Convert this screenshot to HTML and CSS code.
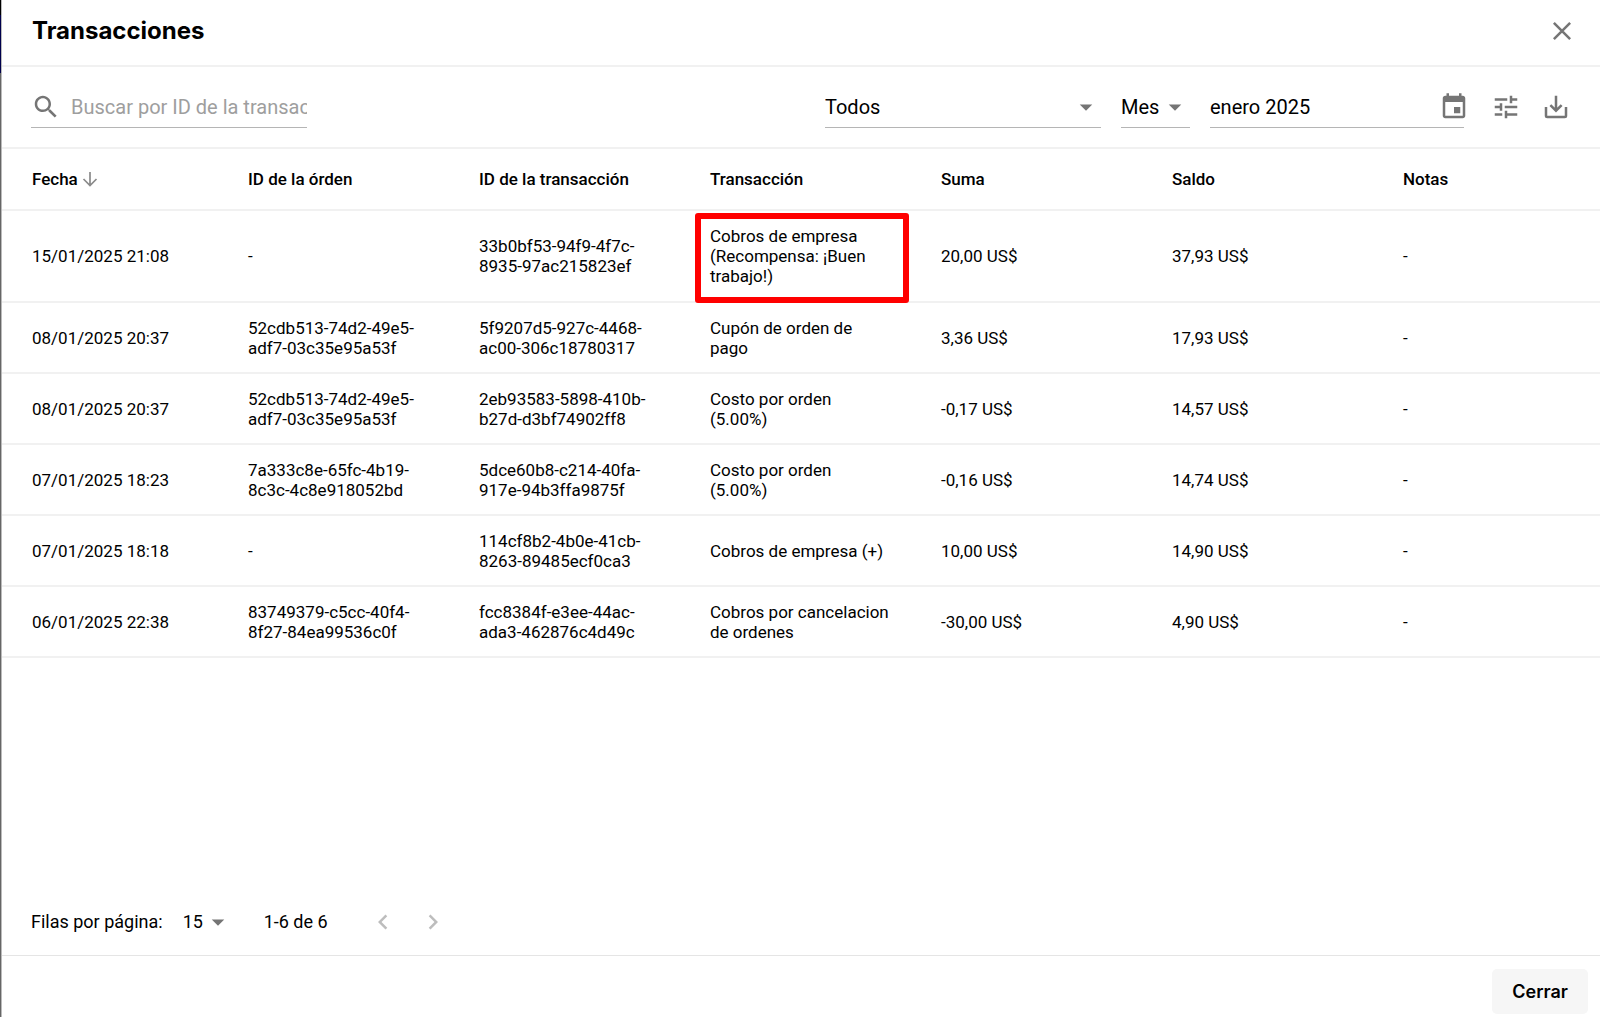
FILE: index.html
```html
<!DOCTYPE html>
<html lang="es">
<head>
    <meta charset="UTF-8">
    <meta name="viewport" content="width=device-width, initial-scale=1.0">
    <title>Transacciones</title>
    <link rel="stylesheet" href="styles.css">
</head>
<body>
    <div class="dialog" role="dialog" aria-labelledby="dialog-title">
        <header class="dialog-header">
            <h1 id="dialog-title">Transacciones</h1>
            <button class="icon-button" type="button" aria-label="Salir">
                <svg class="icon" viewBox="0 0 24 24"><path d="M5.5 5.5l13 13M18.5 5.5l-13 13" fill="none" stroke="currentColor" stroke-width="2"/></svg>
            </button>
        </header>

        <div class="toolbar">
            <label class="field search">
                <svg class="icon" viewBox="0 0 24 24"><path d="M15.5 14h-.79l-.28-.27C15.41 12.59 16 11.11 16 9.5 16 5.91 13.09 3 9.5 3S3 5.91 3 9.5 5.91 16 9.5 16c1.61 0 3.09-.59 4.23-1.57l.27.28v.79l5 4.99L20.49 19l-4.99-5zm-6 0C7.01 14 5 11.99 5 9.5S7.01 5 9.5 5 14 7.01 14 9.5 11.99 14 9.5 14z"/></svg>
                <input type="text" placeholder="Buscar por ID de la transacción" aria-label="Buscar por ID de la transacción">
            </label>
            <div class="field select type">
                <select aria-label="Tipo">
                    <option>Todos</option>
                </select>
                <svg class="icon" viewBox="0 0 24 24"><path d="M7 10l5 5 5-5z"/></svg>
            </div>
            <div class="field select period">
                <select aria-label="Periodo">
                    <option>Mes</option>
                </select>
                <svg class="icon" viewBox="0 0 24 24"><path d="M7 10l5 5 5-5z"/></svg>
            </div>
            <div class="field date">
                <input type="text" value="enero 2025" aria-label="Fecha">
                <button class="calendar-button" type="button" aria-label="Abrir calendario">
                    <svg class="icon" viewBox="0 0 24 24"><path d="M17 12h-5v5h5v-5zM16 1v2H8V1H6v2H5c-1.11 0-1.99.9-1.99 2L3 19c0 1.1.89 2 2 2h14c1.1 0 2-.9 2-2V5c0-1.1-.9-2-2-2h-1V1h-2zm3 18H5V8h14v11z"/></svg>
                </button>
            </div>
            <div class="actions">
                <button class="icon-button" type="button" aria-label="Filtros">
                    <svg class="icon" viewBox="0 0 24 24"><path d="M3 17v2h6v-2H3zM3 5v2h10V5H3zm10 16v-2h8v-2h-8v-2h-2v6h2zM7 9v2H3v2h4v2h2V9H7zm14 4v-2H11v2h10zm-6-4h2V7h4V5h-4V3h-2v6z"/></svg>
                </button>
                <button class="icon-button" type="button" aria-label="Descargar">
                    <svg class="icon" viewBox="0 0 24 24"><path d="M4 12v7a1 1 0 0 0 1 1h14a1 1 0 0 0 1-1v-7M12 3v12M7.5 10.5l4.5 4.5 4.5-4.5" fill="none" stroke="currentColor" stroke-width="2"/></svg>
                </button>
            </div>
        </div>

        <div class="table-wrap">
            <table class="transactions">
                <thead>
                    <tr>
                        <th>
                            <button class="sort" type="button">Fecha<svg viewBox="0 0 18 18"><path d="M9 2v13M2.5 9L9 15.5 15.5 9" fill="none" stroke="currentColor" stroke-width="1.7"/></svg></button>
                        </th>
                        <th>ID de la órden</th>
                        <th>ID de la transacción</th>
                        <th>Transacción</th>
                        <th>Suma</th>
                        <th>Saldo</th>
                        <th class="notes">Notas</th>
                    </tr>
                </thead>
                <tbody>
                    <tr>
                        <td>15/01/2025 21:08</td>
                        <td>-</td>
                        <td>33b0bf53-94f9-4f7c-8935-97ac215823ef</td>
                        <td class="marked">Cobros de empresa (Recompensa: ¡Buen trabajo!)</td>
                        <td>20,00 US$</td>
                        <td>37,93 US$</td>
                        <td>-</td>
                    </tr>
                    <tr>
                        <td>08/01/2025 20:37</td>
                        <td>52cdb513-74d2-49e5-adf7-03c35e95a53f</td>
                        <td>5f9207d5-927c-4468-ac00-306c18780317</td>
                        <td>Cupón de orden de pago</td>
                        <td>3,36 US$</td>
                        <td>17,93 US$</td>
                        <td>-</td>
                    </tr>
                    <tr>
                        <td>08/01/2025 20:37</td>
                        <td>52cdb513-74d2-49e5-adf7-03c35e95a53f</td>
                        <td>2eb93583-5898-410b-b27d-d3bf74902ff8</td>
                        <td>Costo por orden (5.00%)</td>
                        <td>-0,17 US$</td>
                        <td>14,57 US$</td>
                        <td>-</td>
                    </tr>
                    <tr>
                        <td>07/01/2025 18:23</td>
                        <td>7a333c8e-65fc-4b19-8c3c-4c8e918052bd</td>
                        <td>5dce60b8-c214-40fa-917e-94b3ffa9875f</td>
                        <td>Costo por orden (5.00%)</td>
                        <td>-0,16 US$</td>
                        <td>14,74 US$</td>
                        <td>-</td>
                    </tr>
                    <tr>
                        <td>07/01/2025 18:18</td>
                        <td>-</td>
                        <td>114cf8b2-4b0e-41cb-8263-89485ecf0ca3</td>
                        <td>Cobros de empresa (+)</td>
                        <td>10,00 US$</td>
                        <td>14,90 US$</td>
                        <td>-</td>
                    </tr>
                    <tr>
                        <td>06/01/2025 22:38</td>
                        <td>83749379-c5cc-40f4-8f27-84ea99536c0f</td>
                        <td>fcc8384f-e3ee-44ac-ada3-462876c4d49c</td>
                        <td>Cobros por cancelacion de ordenes</td>
                        <td>-30,00 US$</td>
                        <td>4,90 US$</td>
                        <td>-</td>
                    </tr>
                </tbody>
            </table>
        </div>

        <div class="pagination">
            <label for="rows">Filas por página:</label>
            <div class="select rows">
                <select id="rows">
                    <option>15</option>
                </select>
                <svg class="icon" viewBox="0 0 24 24"><path d="M7 10l5 5 5-5z"/></svg>
            </div>
            <span class="range">1-6 de 6</span>
            <div class="pager">
                <button class="icon-button" type="button" aria-label="Página anterior" disabled>
                    <svg class="icon" viewBox="0 0 24 24"><path d="M15.41 7.41L14 6l-6 6 6 6 1.41-1.41L10.83 12z"/></svg>
                </button>
                <button class="icon-button" type="button" aria-label="Página siguiente" disabled>
                    <svg class="icon" viewBox="0 0 24 24"><path d="M8.59 16.59L10 18l6-6-6-6-1.41 1.41L13.17 12z"/></svg>
                </button>
            </div>
        </div>

        <footer class="dialog-footer">
            <button class="close" type="button">Cerrar</button>
        </footer>
    </div>
</body>
</html>
```

FILE: styles.css
```css
* {
    box-sizing: border-box;
}

/* sliver of the dimmed page to the left of the dialog */
body {
    margin: 0;
    padding-left: 1px;
    background: linear-gradient(#000 15px, #00004d 15px, #00004d 73px, #666 73px);
    font-family: Roboto, "Liberation Sans", sans-serif;
    font-size: 17px;
    line-height: 20px;
    color: #000;
}

button, input, select {
    margin: 0;
    padding: 0;
    border: 0;
    background: none;
    font: inherit;
    color: inherit;
    outline: none;
}

button {
    cursor: pointer;
}

.dialog {
    display: flex;
    flex-direction: column;
    min-height: 100vh;
    border-left: 1px solid #bbb;
    background: #fff;
}

.icon {
    display: block;
    flex: none;
    width: 30px;
    height: 30px;
    fill: #757575;
}

.icon-button {
    display: flex;
    align-items: center;
    justify-content: center;
    width: 50px;
    height: 50px;
    color: #757575;
}

.icon-button:disabled .icon {
    fill: #bdbdbd;
}

.dialog-header {
    display: flex;
    align-items: center;
    justify-content: space-between;
    height: 67px;
    padding: 0 13px 4px 30px;
    border-bottom: 2px solid #f1f1f1;
}

.dialog-header h1 {
    margin: 0;
    font-family: Inter, sans-serif;
    font-size: 24px;
    line-height: 30px;
    font-weight: 700;
}

.toolbar {
    display: flex;
    align-items: center;
    gap: 20px;
    height: 82px;
    padding: 0 19px 0 29px;
    border-bottom: 2px solid #f1f1f1;
}

.field {
    display: flex;
    align-items: center;
    height: 42px;
    border-bottom: 1px solid #b5b5b5;
    font-size: 20px;
}

.field input {
    flex: 1;
    min-width: 0;
    height: 40px;
}

.field input::placeholder {
    color: #9e9e9e;
    opacity: 1;
}

.search {
    width: 276px;
    gap: 10px;
    margin-right: auto;
}

/* the arrow shares the grid cell with the select */
.select {
    display: grid;
    align-items: center;
}

.select select {
    grid-area: 1 / 1;
    width: 100%;
    height: 40px;
    appearance: none;
}

.select .icon {
    grid-area: 1 / 1;
    justify-self: end;
    pointer-events: none;
}

.type {
    width: 276px;
}

.period {
    width: 69px;
}

.date {
    width: 254px;
}

.calendar-button {
    margin-right: -5px;
}

.actions {
    display: flex;
    margin-left: -3px;
}

.table-wrap {
    flex: 1;
}

.transactions {
    width: 100%;
    table-layout: fixed;
    border-collapse: separate;
    border-spacing: 0;
}

.transactions th {
    height: 62px;
    padding: 0 36px 0 15px;
    border-bottom: 2px solid #f1f1f1;
    font-weight: 500;
    text-align: left;
    white-space: nowrap;
}

.transactions td {
    height: 71px;
    padding: 14px 36px 14px 15px;
    border-bottom: 2px solid #f1f1f1;
}

.transactions th:first-child,
.transactions td:first-child {
    padding-left: 30px;
}

.transactions .notes {
    width: 212px;
}

.sort {
    display: flex;
    align-items: center;
    gap: 3px;
    font-weight: 500;
}

.sort svg {
    width: 18px;
    height: 18px;
    color: #8a8a8a;
}

.transactions .marked {
    position: relative;
    padding-top: 15px;
    padding-bottom: 15px;
}

.marked::after {
    content: "";
    position: absolute;
    inset: 2px 17px -2px 0;
    border: 6px solid #f00;
    border-radius: 3px;
}

.pagination {
    display: flex;
    align-items: center;
    height: 66px;
    padding-left: 29px;
    font-size: 18px;
}

.rows {
    width: 50px;
    margin-left: 20px;
}

.range {
    margin-left: 31px;
}

.pager {
    display: flex;
    margin-left: 30px;
}

.dialog-footer {
    display: flex;
    justify-content: flex-end;
    padding: 13px 12px 3px;
    border-top: 1px solid #e5e5e5;
}

.close {
    height: 45px;
    padding: 0 20px;
    border-radius: 5px;
    background: #f6f6f6;
    font-family: Inter, sans-serif;
    font-size: 18px;
    font-weight: 600;
}
```
